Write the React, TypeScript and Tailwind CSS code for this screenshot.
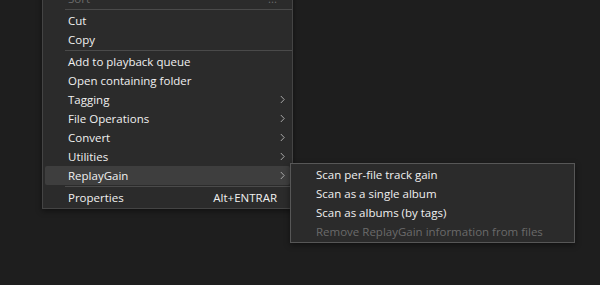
import React from "react";

type Item =
  | { kind: "sep" }
  | { kind: "item"; label: string; sub?: boolean; shortcut?: string; disabled?: boolean; active?: boolean };

const mainItems: Item[] = [
  { kind: "item", label: "Sort", shortcut: "...", disabled: true },
  { kind: "sep" },
  { kind: "item", label: "Cut" },
  { kind: "item", label: "Copy" },
  { kind: "sep" },
  { kind: "item", label: "Add to playback queue" },
  { kind: "item", label: "Open containing folder" },
  { kind: "item", label: "Tagging", sub: true },
  { kind: "item", label: "File Operations", sub: true },
  { kind: "item", label: "Convert", sub: true },
  { kind: "item", label: "Utilities", sub: true },
  { kind: "item", label: "ReplayGain", sub: true, active: true },
  { kind: "sep" },
  { kind: "item", label: "Properties", shortcut: "Alt+ENTRAR" },
];

const subItems: Item[] = [
  { kind: "item", label: "Scan per-file track gain" },
  { kind: "item", label: "Scan as a single album" },
  { kind: "item", label: "Scan as albums (by tags)" },
  { kind: "item", label: "Remove ReplayGain information from files", disabled: true },
];

function Chevron() {
  return (
    <svg width="5" height="9" viewBox="0 0 5 9" className="shrink-0">
      <path d="M0.8 1 L4.2 4.5 L0.8 8" fill="none" stroke="#a8a8a8" strokeWidth="1" />
    </svg>
  );
}

function MenuList({ items }: { items: Item[] }) {
  return (
    <>
      {items.map((it, i) =>
        it.kind === "sep" ? (
          <div key={i} className="h-[3px] flex items-center pl-[22px]">
            <div className="h-px w-full bg-[#4a4a4a]" />
          </div>
        ) : (
          <div
            key={i}
            className={`h-[19px] mx-[2px] flex items-center pl-[23px] pr-[5px] rounded-[2px] ${
              it.active ? "bg-[#3e3e3e]" : ""
            } ${it.disabled ? "text-[#6a6a6a]" : "text-[#f0f0f0]"}`}
          >
            <span className="flex-1 whitespace-nowrap">{it.label}</span>
            {it.shortcut && <span className="whitespace-nowrap pr-[8px]">{it.shortcut}</span>}
            {it.sub && <Chevron />}
          </div>
        )
      )}
    </>
  );
}

export default function App() {
  return (
    <div
      className="relative w-[600px] h-[285px] overflow-hidden bg-[#1e1e1e] text-[11.5px] leading-none"
      style={{ fontFamily: '"Open Sans", "Noto Sans", sans-serif' }}
    >
      {/* main context menu */}
      <div className="absolute left-[42px] top-[-13px] w-[251px] bg-[#2b2b2b] border border-[#444] shadow-[0_2px_6px_rgba(0,0,0,0.45)] pt-[1px] pb-[1px]">
        <MenuList items={mainItems} />
      </div>

      {/* ReplayGain submenu */}
      <div className="absolute left-[290px] top-[163px] w-[285px] bg-[#2b2b2b] border border-[#575757] shadow-[0_2px_6px_rgba(0,0,0,0.45)] pt-[1px] pb-[1px]">
        <MenuList items={subItems} />
      </div>
    </div>
  );
}
